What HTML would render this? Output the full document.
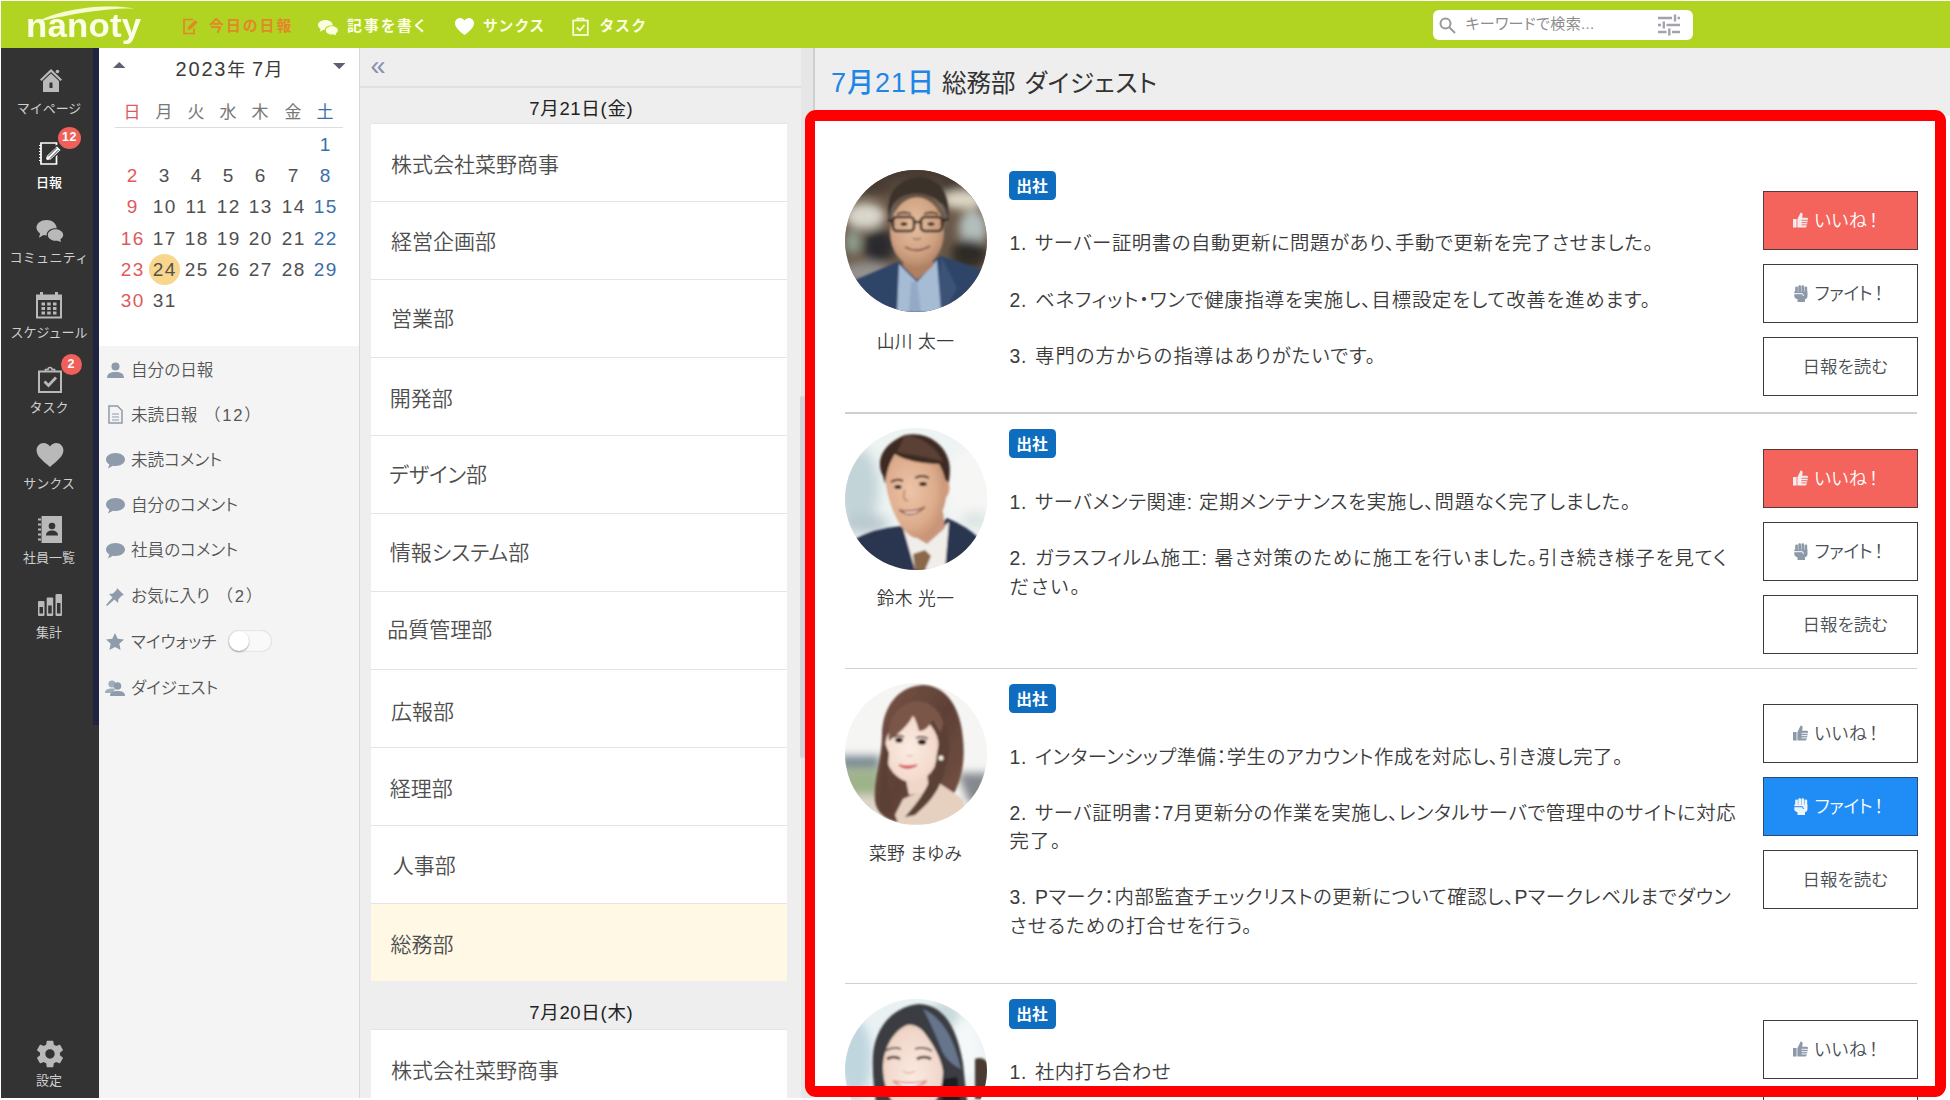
<!DOCTYPE html>
<html lang="ja">
<head>
<meta charset="utf-8">
<title>nanoty</title>
<style>
*{box-sizing:border-box;margin:0;padding:0}
html,body{width:1950px;height:1100px;overflow:hidden;background:#fff}
body{position:relative;font-family:"Liberation Sans","Noto Sans CJK JP",sans-serif;color:#444;font-feature-settings:"palt"}
.abs{position:absolute}
/* header */
#hdr{position:absolute;left:1px;top:1px;width:1949px;height:47px;background:#b1d322}
#hdr .nav{position:absolute;top:0;height:47px;line-height:51px;font-size:14.8px;letter-spacing:2.1px;font-weight:700;color:#fbffe0;white-space:nowrap}
#hdr .nav.on{color:#e2882a}
#search{position:absolute;left:1432px;top:9px;width:260px;height:30px;background:#fff;border-radius:6px}
#search span{position:absolute;left:32.500px;top:0;line-height:28px;font-size:15px;color:#8c8c8c;white-space:nowrap;letter-spacing:.35px}
/* sidebar */
#side{position:absolute;left:1px;top:48px;width:98px;height:1050px;background:#333}
#side .strip{position:absolute;left:92px;top:0;width:6px;height:677px;background:#1f2440}
#side .it{font-feature-settings:normal;position:absolute;left:0;width:96px;text-align:center;font-size:13px;color:#cfcfcf;white-space:nowrap;line-height:16px}
#side .it.on{color:#fff;font-weight:500}
#side .bd{position:absolute;background:#f0605a;color:#fff;border-radius:50%;text-align:center;font-size:12px}
/* calendar */
#cal{position:absolute;left:99px;top:48px;width:260px;height:298px;background:#fff}
#cal .ttl{position:absolute;left:0;top:7px;width:260px;text-align:center;font-size:20px;color:#3a3a3a;line-height:28px;letter-spacing:1.200px}
#cal .wk,#cal .d{position:absolute;width:32px;text-align:center;font-size:17px;line-height:28px;color:#777}
#cal .d{font-size:19px;color:#505050;letter-spacing:1.500px;text-indent:1.500px;line-height:27px}
#cal .sun{color:#e0595c}
#cal .sat{color:#3c6ea8}
#menu{position:absolute;left:99px;top:346px;width:260px;height:752px;background:#f4f4f4}
#menu .mi{position:absolute;left:32px;font-size:16.600px;font-weight:350;color:#555;white-space:nowrap;line-height:24px;margin-top:2px}
#menu .mi i{font-style:normal;font-feature-settings:normal;letter-spacing:1.700px;margin-left:2px}
#menu svg{margin-top:1px}
#menu svg{position:absolute}
/* middle */
#mid{position:absolute;left:359px;top:48px;width:442px;height:1050px;background:#eee;border-left:1px solid #d8d8d8}
#mid .dt{position:absolute;left:0;width:442px;text-align:center;font-size:18.5px;color:#222;line-height:26px;letter-spacing:.7px;text-indent:.7px}
#mid .li{position:absolute;left:11px;width:416px;height:78px;background:#fff;border-top:1px solid #e4e4e4;font-size:21px;font-weight:350;color:#4e4e4e;line-height:79px;padding-left:21px;white-space:nowrap}
#mid .li.sel{background:#fef8e4}
/* right */
#right{position:absolute;left:813px;top:48px;width:1137px;height:1050px;background:#eee;border-left:2px solid #cfcfcf}
#content{position:absolute;left:813px;top:116px;width:1137px;height:984px;background:#fff}
#redbox{position:absolute;left:805px;top:110px;width:1141px;height:987px;border:solid #fe0000;border-width:11px 11.200px 11.200px 10.800px;border-radius:11px}
.hr{position:absolute;left:845px;width:1072px;height:1.500px;background:#cfcfcf}
.av{position:absolute;left:845px;width:142px;height:142px;border-radius:50%;overflow:hidden}
.nm{position:absolute;left:815.500px;width:200px;text-align:center;font-size:17.800px;font-weight:350;color:#3c3c3c;line-height:24px;white-space:nowrap;letter-spacing:.3px}
.tag{position:absolute;left:1008.500px;width:47px;height:29.500px;border-radius:4.500px;background:#0e6dbf;color:#fff;font-weight:700;font-size:15.800px;line-height:31px;text-align:center;letter-spacing:0}
.tx{position:absolute;left:1009.500px;font-size:19.400px;font-weight:350;color:#3c3c3c;white-space:nowrap}
.tx p{line-height:28.600px;margin:0 0 27.700px 0}
.tx .no{display:inline-block;width:25.500px;letter-spacing:.8px}
.btn{position:absolute;left:1762.500px;width:155.500px;height:58.500px;border:1.700px solid #3c3c3c;background:#fff;color:#4a4f55;font-size:18px;font-weight:350;white-space:nowrap}
.btn .ic{position:absolute}
.btn .bt{position:absolute;top:0;line-height:59.500px}
.btn .ex{letter-spacing:0;margin-left:1.700px}
.btn.red{background:#f4645c;color:#fff;border-color:#5a3a38}
.btn.blue{background:#1f8df5;color:#fff;border-color:#2a4a7a}
</style>
</head>
<body>
<div id="hdr">
<div class="abs" style="left:25px;top:6.500px;font-size:33px;font-weight:700;color:#fbffe6;line-height:36px;letter-spacing:.2px;font-family:'Liberation Sans',sans-serif;transform:scaleX(1.055);transform-origin:0 0">nanoty</div>
<svg class="abs" style="left:30px;top:3px" width="112" height="22" viewBox="0 0 112 22"><path d="M5 18.500 C28 5 72 -1 104 4.500 C74 3.500 32 11.500 5 18.500Z" fill="#f6fbd0"/></svg>
<svg class="abs" style="left:181px;top:17px" width="17" height="17" viewBox="0 0 17 17" fill="none" stroke="#e2882a" stroke-width="1.700"><path d="M11 1.5H2v14h10v-5"/><path d="M6 11.5l1-3 6-6 2 2-6 6z" fill="#e2882a" stroke-width="1"/></svg>
<div class="nav on" style="left:208px">今日の日報</div>
<svg class="abs" style="left:317px;top:18.500px" width="20" height="15.500" viewBox="0 0 20 18" preserveAspectRatio="none" fill="#fbffe0"><path d="M7.5 0C3.4 0 0 2.6 0 5.9c0 1.8 1 3.4 2.600 4.500L1.800 13.500l3.400-2c.5.100.900.200 1.400.200.300-3.200 3.300-5.300 6.900-5.300.500 0 1 0 1.400.100C14.600 2.600 11.400 0 7.500 0z"/><path d="M13.800 7.400c-3.300 0-6 2.100-6 4.700s2.700 4.700 6 4.700c.500 0 1-.100 1.500-.200l2.900 1.400-.600-2.500c1.400-.800 2.300-2 2.300-3.400 0-2.600-2.700-4.700-6.100-4.700z"/></svg>
<div class="nav" style="left:346px">記事を書く</div>
<svg class="abs" style="left:454px;top:17px" width="19" height="17" viewBox="0 0 19 17" fill="#fff"><path d="M9.500 17C4 12.500 0 9.300 0 5.200 0 2.300 2.200 0 5 0c1.800 0 3.500 1 4.500 2.500C10.500 1 12.200 0 14 0c2.800 0 5 2.300 5 5.200 0 4.100-4 7.300-9.500 11.800z"/></svg>
<div class="nav" style="left:482px">サンクス</div>
<svg class="abs" style="left:571px;top:16px" width="17" height="19" viewBox="0 0 17 19" fill="none" stroke="#fbffe0" stroke-width="1.700"><rect x="1.200" y="3.500" width="14.600" height="14.500"/><path d="M5.500 3.500V1.500h6v2" /><path d="M4.800 10.500l3 3 4.700-5.500" stroke-width="1.800"/></svg>
<div class="nav" style="left:599px">タスク</div>
<div id="search">
<svg class="abs" style="left:6px;top:7px" width="17" height="17" viewBox="0 0 17 17" fill="none" stroke="#9a9a9a" stroke-width="2"><circle cx="6.500" cy="6.500" r="5"/><path d="M10.500 10.500l5.500 5.500"/></svg>
<span>キーワードで検索...</span>
<svg class="abs" style="left:224px;top:4px" width="24" height="22" viewBox="0 0 24 22" fill="none" stroke="#a3a3ab" stroke-width="2.400"><path d="M1 4h14M20.500 4h2.500M18 .5v7M1 11h3M9.500 11h13.500M6.800 7.500v7M1 18h8.500M15 18h8M12.300 14.500v7"/></svg>
</div>
</div>
<div id="side"><div class="strip"></div>
<svg class="abs" style="left:38.500px;top:21px" width="22" height="23" viewBox="0 0 22 23" fill="#b9b9b9"><path d="M11 0L0 10.500l1.500 1.500L11 3l9.500 9 1.500-1.500z"/><path d="M3 12L11 4.500l8 7.500V23H3z"/><circle cx="17.500" cy="2.500" r="1.800"/><rect x="9.500" y="13.500" width="3" height="5.500" rx=".5" fill="#333"/></svg>
<div class="it" style="top:53px">マイページ</div>
<svg class="abs" style="left:37px;top:93px" width="25" height="25" viewBox="0 0 25 25" fill="none" stroke="#fff" stroke-width="1.700"><path d="M3 2h15.500v21H3z"/><path d="M3 4.500h-2M3 7.500h-2M3 10.500h-2M3 13.500h-2M3 16.500h-2M3 19.500h-2" stroke-width="1.200"/><path d="M6.500 20.500l1.800-6L19 4.500l4.500 4.500L13 19z" fill="#fff" stroke="#333" stroke-width="1.400"/><path d="M10 15.500l8.500-8.500M12 17.500l8.500-8.500" stroke="#333" stroke-width="1"/><path d="M6.500 20.500l1-3.200 2.300 2.300z" fill="#333" stroke="none"/></svg>
<div class="it on" style="top:127px">日報</div>
<svg class="abs" style="left:35px;top:172px" width="28" height="22" viewBox="0 0 32 26" fill="#b9b9b9"><path d="M12 0C5.400 0 0 4 0 9c0 2.800 1.700 5.300 4.300 7L3 21l5.500-3.200c1.100.200 2.300.400 3.500.400 0-5.500 5-8.500 10.500-8.500.600 0 1 0 1.500.100C23.500 4 18.500 0 12 0z"/><path d="M22.500 11c-5 0-9 3-9 6.800s4 6.800 9 6.800c.800 0 1.600-.100 2.300-.200L29 26l-.800-3.300c2-1.200 3.400-3 3.400-5 0-3.700-4.100-6.700-9.100-6.700z"/></svg>
<div class="it" style="top:202px;letter-spacing:.3px">コミュニティ</div>
<svg class="abs" style="left:35px;top:243.500px" width="26" height="27" viewBox="0 0 26 27" fill="#b9b9b9"><path d="M0 2.500h26v24H0zM2 8v16.500h22V8z" fill-rule="evenodd"/><path d="M4 0h3v4H4zM19 0h3v4h-3z"/><g><rect x="5.500" y="10.500" width="3.500" height="3"/><rect x="11.200" y="10.500" width="3.500" height="3"/><rect x="17" y="10.500" width="3.500" height="3"/><rect x="5.500" y="15" width="3.500" height="3"/><rect x="11.200" y="15" width="3.500" height="3"/><rect x="17" y="15" width="3.500" height="3"/><rect x="5.500" y="19.500" width="3.500" height="3"/><rect x="11.200" y="19.500" width="3.500" height="3"/><rect x="17" y="19.500" width="3.500" height="3"/></g></svg>
<div class="it" style="top:277px">スケジュール</div>
<svg class="abs" style="left:37px;top:318px" width="24" height="27" viewBox="0 0 24 27" fill="none" stroke="#b9b9b9" stroke-width="2"><rect x="1" y="5.500" width="22" height="20.500"/><path d="M7.500 5.500V3.500h2.500a2 2 0 0 1 4 0h2.500v2" stroke-width="1.600"/><path d="M6.500 15.500l4 4 7.500-8" stroke-width="2.800"/></svg>
<div class="it" style="top:352px">タスク</div>
<svg class="abs" style="left:35px;top:395px" width="28" height="24" viewBox="0 0 19 17" fill="#b9b9b9"><path d="M9.500 17C4 12.500 0 9.300 0 5.200 0 2.300 2.200 0 5 0c1.800 0 3.500 1 4.500 2.500C10.500 1 12.200 0 14 0c2.800 0 5 2.300 5 5.200 0 4.100-4 7.300-9.500 11.800z"/></svg>
<div class="it" style="top:427.500px">サンクス</div>
<svg class="abs" style="left:36px;top:468px" width="26" height="27" viewBox="0 0 26 27" fill="#b9b9b9"><path d="M4.500 0h20.500v27H4.500z"/><path d="M1 3.500h3M1 8.500h3M1 13.500h3M1 18.500h3M1 23.500h3" stroke="#b9b9b9" stroke-width="2"/><circle cx="15" cy="10" r="3.300" fill="#333"/><path d="M9 19.500c0-3.500 2.700-5 6-5s6 1.500 6 5z" fill="#333"/></svg>
<div class="it" style="top:501.500px">社員一覧</div>
<svg class="abs" style="left:37px;top:546px" width="24" height="22" viewBox="0 0 24 22" fill="#b9b9b9"><rect x="0" y="7" width="6.500" height="15" rx="1"/><rect x="8.700" y="3.500" width="6.500" height="18.500" rx="1"/><rect x="17.500" y="0" width="6.500" height="22" rx="1"/><rect x="1.500" y="13" width="3.500" height="6.500" fill="#333"/><rect x="10.200" y="11.500" width="3.500" height="8" fill="#333"/><rect x="19" y="9" width="3.500" height="10.500" fill="#333"/></svg>
<div class="it" style="top:577px">集計</div>
<svg class="abs" style="left:32.500px;top:990px" width="32" height="32" viewBox="0 0 24 24" fill="#b9b9b9"><path d="M19.430 12.980c.040-.320.070-.640.070-.980s-.030-.660-.070-.980l2.110-1.650c.190-.150.240-.420.120-.640l-2-3.460c-.120-.220-.390-.300-.610-.220l-2.490 1c-.520-.400-1.080-.730-1.690-.980l-.380-2.650C14.460 2.180 14.250 2 14 2h-4c-.250 0-.460.180-.490.420l-.380 2.650c-.610.250-1.170.590-1.690.980l-2.490-1c-.230-.090-.490 0-.610.220l-2 3.460c-.130.220-.070.490.120.640l2.110 1.650c-.040.320-.070.650-.070.980s.030.660.070.980l-2.110 1.650c-.190.150-.240.420-.120.640l2 3.460c.120.220.390.300.610.220l2.490-1c.520.400 1.080.730 1.690.980l.380 2.650c.030.240.240.420.490.420h4c.250 0 .460-.180.490-.420l.380-2.650c.610-.250 1.170-.590 1.690-.980l2.490 1c.230.090.490 0 .610-.220l2-3.460c.120-.220.070-.490-.120-.640l-2.110-1.650zM12 15.500c-1.930 0-3.500-1.570-3.500-3.500s1.570-3.500 3.500-3.500 3.500 1.570 3.500 3.500-1.570 3.500-3.500 3.500z"/></svg>
<div class="it" style="top:1025px">設定</div>
<div class="bd" style="left:57px;top:79px;width:23px;height:22px;line-height:21px;font-size:12.500px;font-weight:700;letter-spacing:.5px">12</div>
<div class="bd" style="left:59.500px;top:305.500px;width:21px;height:21px;line-height:20px;font-size:12.500px;font-weight:700">2</div>
</div>
<div id="cal">
<div class="ttl"><span style="letter-spacing:1.800px">2023</span><span style="font-size:18px;letter-spacing:0">年</span> <span>7</span><span style="font-size:18px;letter-spacing:0">月</span></div>
<svg class="abs" style="left:14px;top:14px" width="12.500" height="6.500" viewBox="0 0 13 8" preserveAspectRatio="none"><path d="M0 7.500L6.500 0 13 7.500z" fill="#5c6070"/></svg>
<svg class="abs" style="left:233.500px;top:14.500px" width="12.500" height="6.500" viewBox="0 0 13 8" preserveAspectRatio="none"><path d="M0 0h13L6.500 7.500z" fill="#5c6070"/></svg>
<div class="wk sun" style="left:17px;top:51px">日</div>
<div class="wk" style="left:49px;top:51px">月</div>
<div class="wk" style="left:81px;top:51px">火</div>
<div class="wk" style="left:113px;top:51px">水</div>
<div class="wk" style="left:145px;top:51px">木</div>
<div class="wk" style="left:178px;top:51px">金</div>
<div class="wk sat" style="left:210px;top:51px">土</div>
<div class="abs" style="left:16px;top:79px;width:228px;height:1px;background:#ddd"></div>
<div class="abs" style="left:50px;top:206px;width:31px;height:31px;border-radius:50%;background:#f8d68b"></div>
<div class="d sat" style="left:210px;top:83px">1</div>
<div class="d sun" style="left:17px;top:114px">2</div>
<div class="d" style="left:49px;top:114px">3</div>
<div class="d" style="left:81px;top:114px">4</div>
<div class="d" style="left:113px;top:114px">5</div>
<div class="d" style="left:145px;top:114px">6</div>
<div class="d" style="left:178px;top:114px">7</div>
<div class="d sat" style="left:210px;top:114px">8</div>
<div class="d sun" style="left:17px;top:145px">9</div>
<div class="d" style="left:49px;top:145px">10</div>
<div class="d" style="left:81px;top:145px">11</div>
<div class="d" style="left:113px;top:145px">12</div>
<div class="d" style="left:145px;top:145px">13</div>
<div class="d" style="left:178px;top:145px">14</div>
<div class="d sat" style="left:210px;top:145px">15</div>
<div class="d sun" style="left:17px;top:177px">16</div>
<div class="d" style="left:49px;top:177px">17</div>
<div class="d" style="left:81px;top:177px">18</div>
<div class="d" style="left:113px;top:177px">19</div>
<div class="d" style="left:145px;top:177px">20</div>
<div class="d" style="left:178px;top:177px">21</div>
<div class="d sat" style="left:210px;top:177px">22</div>
<div class="d sun" style="left:17px;top:208px">23</div>
<div class="d" style="left:49px;top:208px">24</div>
<div class="d" style="left:81px;top:208px">25</div>
<div class="d" style="left:113px;top:208px">26</div>
<div class="d" style="left:145px;top:208px">27</div>
<div class="d" style="left:178px;top:208px">28</div>
<div class="d sat" style="left:210px;top:208px">29</div>
<div class="d sun" style="left:17px;top:239px">30</div>
<div class="d" style="left:49px;top:239px">31</div>
</div>
<div id="menu">
<svg style="left:8px;top:15px" width="17" height="16" viewBox="0 0 17 16" fill="#8d9bab"><circle cx="8.500" cy="4.500" r="4"/><path d="M0 16c0-4.500 3.500-6 8.500-6s8.500 1.500 8.500 6z"/></svg>
<div class="mi" style="top:11px">自分の日報</div>
<svg style="left:9px;top:58px" width="15" height="19" viewBox="0 0 15 19" fill="none" stroke="#8d9bab" stroke-width="1.500"><path d="M1 1h8.500L14 5.500V18H1z"/><path d="M4 9h7M4 12h7M4 15h7" stroke-width="1.200"/></svg>
<div class="mi" style="top:56px">未読日報 <i>（12）</i></div>
<svg style="left:7px;top:106px" width="19" height="16" viewBox="0 0 19 16" fill="#8d9bab"><path d="M9.500 0C4.300 0 0 2.900 0 6.500c0 2 1.300 3.800 3.400 5L2 15.500l5-2.700c.8.100 1.600.200 2.500.200 5.200 0 9.500-2.900 9.500-6.500S14.700 0 9.500 0z"/></svg>
<div class="mi" style="top:101px">未読コメント</div>
<svg style="left:7px;top:151px" width="19" height="16" viewBox="0 0 19 16" fill="#8d9bab"><path d="M9.500 0C4.300 0 0 2.900 0 6.500c0 2 1.300 3.800 3.400 5L2 15.500l5-2.700c.8.100 1.600.200 2.500.200 5.200 0 9.500-2.900 9.500-6.500S14.700 0 9.500 0z"/></svg>
<div class="mi" style="top:146px">自分のコメント</div>
<svg style="left:7px;top:196px" width="19" height="16" viewBox="0 0 19 16" fill="#8d9bab"><path d="M9.500 0C4.300 0 0 2.900 0 6.500c0 2 1.300 3.800 3.400 5L2 15.500l5-2.700c.8.100 1.600.200 2.500.200 5.200 0 9.500-2.900 9.500-6.500S14.700 0 9.500 0z"/></svg>
<div class="mi" style="top:191px">社員のコメント</div>
<svg style="left:7px;top:241px" width="18" height="18" viewBox="0 0 18 18" fill="#8d9bab"><path d="M11 0l7 7-2 .5-3.500 3.500-.5 4-3.500-3.500L1 18l-1-1 6.500-7.500L3 6l4-.5L10.500 2z"/></svg>
<div class="mi" style="top:237px">お気に入り <i>（2）</i></div>
<svg style="left:7px;top:286px" width="18" height="17" viewBox="0 0 18 17" fill="#8d9bab"><path d="M9 0l2.700 5.800 6.300.7-4.700 4.300 1.300 6.200L9 13.900 3.400 17l1.300-6.200L0 6.500l6.300-.7z"/></svg>
<div class="mi" style="top:283px">マイウォッチ</div>
<svg style="left:6px;top:333px" width="20" height="16" viewBox="0 0 20 16" fill="#8d9bab"><circle cx="7" cy="4" r="3.600" opacity=".8"/><path d="M0 13c0-3.500 3-4.500 7-4.500 1 0 2 .100 3 .500L8 13z" opacity=".8"/><circle cx="12.500" cy="6" r="3.800"/><path d="M5 16c0-3.800 3-5 7.500-5s7.500 1.200 7.500 5z"/></svg>
<div class="mi" style="top:329px">ダイジェスト</div>
<div class="abs" style="left:129px;top:284px;width:44px;height:22px;border-radius:11px;background:#f9f9f9;box-shadow:0 0 2px rgba(0,0,0,.25) inset"></div>
<div class="abs" style="left:130px;top:285px;width:20px;height:20px;border-radius:50%;background:#fff;box-shadow:0 1px 2px rgba(0,0,0,.35)"></div>
</div>
<div id="mid">
<div class="abs" style="left:10.500px;top:4.500px;font-size:27px;line-height:26px;color:#8590ae;font-family:'Liberation Sans',sans-serif">«</div>
<div class="abs" style="left:0;top:38px;width:441px;height:1.500px;background:#e0e0e0"></div>
<div class="dt" style="top:48px">7月21日(金)</div>
<div class="li" style="top:75px"><span style="position:relative;left:-1.1px;top:0.8px">株式会社菜野商事</span></div>
<div class="li" style="top:153px"><span style="position:relative;left:-1.1px;top:-0.3px">経営企画部</span></div>
<div class="li" style="top:231px"><span style="position:relative;left:-1.1px;top:-1px">営業部</span></div>
<div class="li" style="top:309px"><span style="position:relative;left:-2.2px;top:0.5px">開発部</span></div>
<div class="li" style="top:387px"><span style="position:relative;left:-2.9px;top:-1px">デザイン部</span></div>
<div class="li" style="top:465px"><span style="position:relative;left:-2.2px;top:-0.7px">情報システム部</span></div>
<div class="li" style="top:543px"><span style="position:relative;left:-4.7px;top:-2.5px">品質管理部</span></div>
<div class="li" style="top:621px"><span style="position:relative;left:-1.1px;top:1.5px">広報部</span></div>
<div class="li" style="top:699px"><span style="position:relative;left:-2.2px;top:1px">経理部</span></div>
<div class="li" style="top:777px"><span style="position:relative;left:0.7px;top:0px">人事部</span></div>
<div class="li sel" style="top:855px"><span style="position:relative;left:-1.4px;top:0.8px">総務部</span></div>
<div class="dt" style="top:952px">7月20日(木)</div>
<div class="li" style="top:981px"><span style="position:relative;left:-1.100px;top:.5px">株式会社菜野商事</span></div>
</div>
<div class="abs" style="left:801px;top:48px;width:12px;height:1050px;background:#e6e6e6"></div>
<div class="abs" style="left:800px;top:396px;width:5px;height:362px;background:#d2d2da;border-radius:2px"></div>
<div id="right">
<div class="abs" style="left:16px;top:17px;font-size:24.500px;line-height:36px;white-space:nowrap;color:#333"><span style="color:#1f86e8;letter-spacing:1px;font-size:27px;font-weight:500">7月21日</span><span style="margin-left:7px">総務部</span><span style="margin-left:9px;letter-spacing:.7px">ダイジェスト</span></div>
</div>
<div id="content"></div>
<div id="cards">
<div class="av" style="top:170.3px"><svg width="142" height="142" viewBox="0 0 142 142">
<defs><filter id="b1" x="-20%" y="-20%" width="140%" height="140%"><feGaussianBlur stdDeviation="5"/></filter><filter id="s1"><feGaussianBlur stdDeviation="1.100"/></filter>
<radialGradient id="f1" cx=".45" cy=".4" r=".7"><stop offset="0" stop-color="#e6c0a0"/><stop offset=".6" stop-color="#cfa282"/><stop offset="1" stop-color="#a87a5c"/></radialGradient></defs>
<rect width="142" height="142" fill="#6a5848"/>
<g filter="url(#b1)">
<rect x="-10" y="-10" width="162" height="34" fill="#463b31"/>
<ellipse cx="20" cy="46" rx="20" ry="13" fill="#d9d6cc"/>
<ellipse cx="118" cy="30" rx="22" ry="9" fill="#e0d8c6"/>
<ellipse cx="128" cy="58" rx="14" ry="18" fill="#b3bdbb"/>
<ellipse cx="34" cy="76" rx="16" ry="17" fill="#2b2a2d"/>
<ellipse cx="124" cy="84" rx="18" ry="15" fill="#2f2926"/>
<ellipse cx="22" cy="104" rx="26" ry="12" fill="#95918d"/>
<ellipse cx="8" cy="72" rx="8" ry="12" fill="#8f9f8f"/>
<ellipse cx="70" cy="16" rx="30" ry="6" fill="#5a4c3e"/>
</g>
<g filter="url(#s1)">
<path d="M10 110 L52 92 L72 100 L96 86 L138 100 L145 150 L0 150z" fill="#2e4467"/>
<path d="M96 86 L112 118 L100 142 L92 142z" fill="#3a5277"/>
<path d="M54 94 L72 112 L92 90 L96 142 L52 142z" fill="#a6bbd4"/>
<path d="M66 112 L72 112 L76 142 L64 142z" fill="#93aac6"/>
<path d="M58 80h30v16l-16 14-14-14z" fill="#b08062"/>
<ellipse cx="72" cy="62" rx="27" ry="35" fill="url(#f1)"/>
<path d="M45 52 C40 30 46 12 72 7 C98 7 106 28 103 54 C101 42 97 32 88 27 C74 20 58 23 51 31 C47 38 46 46 45 52z" fill="#3a302b"/>
<path d="M45 52 C44 44 46 36 51 31 C49 40 48 48 47 58z M103 54 C103 44 100 36 96 32 C99 40 100 50 100 60z" fill="#6a625e"/>
<g fill="none" stroke="#3b2b24" stroke-width="2.600"><rect x="48" y="47" width="21" height="14" rx="4"/><rect x="76" y="47" width="21" height="14" rx="4"/><path d="M69 52h7M43 50l5 1M97 51l6-2"/></g>
<path d="M60 77 Q72 84 85 76" fill="none" stroke="#8a5346" stroke-width="2"/>
<ellipse cx="59" cy="54" rx="3.500" ry="1.800" fill="#2e211c"/><ellipse cx="86" cy="54" rx="3.500" ry="1.800" fill="#2e211c"/><path d="M52 44q7-3 14 0M79 44q7-3 14 0" stroke="#3a2d27" stroke-width="1.800" fill="none"/>
<path d="M68 68q4 3 8 0" stroke="#9a6a52" stroke-width="1.500" fill="none"/>
</g></svg></div>
<div class="nm" style="top:329.6px">山川 太一</div>
<div class="tag" style="top:170.6px">出社</div>
<div class="tx" style="top:228.7px"><p style="margin-bottom:28.3px"><span class="no">1.</span><span class="ln" id="l0" style="letter-spacing:0.566px">サーバー証明書の自動更新に問題があり、手動で更新を完了させました。</span></p><p style="margin-bottom:28.3px"><span class="no">2.</span><span class="ln" id="l1" style="letter-spacing:0.786px">ベネフィット・ワンで健康指導を実施し、目標設定をして改善を進めます。</span></p><p style="margin-bottom:28.3px"><span class="no">3.</span><span class="ln" id="l2" style="letter-spacing:1.039px">専門の方からの指導はありがたいです。</span></p></div>
<div class="btn red" style="top:191.1px"><svg class="ic" style="left:29.5px;top:20px" width="15" height="16" viewBox="0 0 15 16" fill="#f3ecee"><path d="M0 7h3.600v8.500H0z"/><path d="M4.400 7.200L7.600.5c1.500 0 2.300 1 2 2.600L9.100 5.800h4.600c1 0 1.500.8 1.300 1.600l-1.300 6.600c-.200.900-.800 1.500-1.800 1.500H4.400z"/><path d="M8.500 8.300h6.500M8.500 10.600h6M8.500 12.900h5.500" stroke="#f4645c" stroke-width=".9"/></svg><span class="bt" style="left:50.500px;letter-spacing:.4px">いいね<span class="ex">！</span></span></div>
<div class="btn" style="top:264.1px"><svg class="ic" style="left:30.5px;top:19.500px" width="14" height="17" viewBox="0 0 14 17" fill="#8d99a8"><rect x="1.200" y="1.500" width="2.700" height="6" rx="1.200"/><rect x="4.300" y="0.300" width="2.700" height="7" rx="1.200"/><rect x="7.400" y="0.300" width="2.700" height="7" rx="1.200"/><rect x="10.500" y="1.500" width="2.700" height="6" rx="1.200"/><path d="M.3 6.500h13.200v4.500c0 1.800-1 2.800-2.500 3.300V17H3.500v-2.700C1.800 13.800.3 12.800.3 11z"/><path d="M0 8.700h8.500l1 2.300" fill="none" stroke="#fff" stroke-width="1"/></svg><span class="bt" style="left:51px;letter-spacing:-.4px">ファイト<span class="ex" style="margin-left:2px">！</span></span></div>
<div class="btn" style="top:337.1px"><span class="bt" style="left:39px;font-size:17.500px">日報を読む</span></div>
<div class="hr" style="top:412.4px"></div>
<div class="av" style="top:428.3px"><svg width="142" height="142" viewBox="0 0 142 142">
<defs><filter id="b2" x="-20%" y="-20%" width="140%" height="140%"><feGaussianBlur stdDeviation="6"/></filter><filter id="s2"><feGaussianBlur stdDeviation="1.100"/></filter>
<radialGradient id="f2" cx=".4" cy=".45" r=".7"><stop offset="0" stop-color="#eec4a8"/><stop offset=".6" stop-color="#dcab8c"/><stop offset="1" stop-color="#b98466"/></radialGradient></defs>
<rect width="142" height="142" fill="#eef3f3"/>
<g filter="url(#b2)">
<ellipse cx="12" cy="60" rx="22" ry="40" fill="#c3d4d8"/>
<ellipse cx="20" cy="96" rx="24" ry="10" fill="#b9c9ce"/>
<ellipse cx="125" cy="60" rx="22" ry="40" fill="#f6f7f5"/>
<ellipse cx="130" cy="92" rx="14" ry="8" fill="#d9e3e3"/>
</g>
<g filter="url(#s2)">
<path d="M8 112 Q30 100 56 98 L74 118 L102 90 Q122 98 136 112 L145 150 L0 150z" fill="#2a3550"/>
<path d="M58 100 L70 142 L100 142 L104 94 L84 112z" fill="#f1eeea"/>
<path d="M68 126 L80 122 L86 128 L80 142 L70 142z" fill="#8a6848"/>
<path d="M60 90 L98 84 L100 100 L82 116 L62 104z" fill="#c9967a"/>
<path d="M40 50 C38 30 50 22 72 24 C94 26 104 40 102 62 C100 86 88 108 74 110 C60 112 44 84 40 50z" fill="url(#f2)"/>
<path d="M38 48 C30 32 38 16 60 7 C82 3 100 16 104 34 C106 44 104 52 103 60 C100 52 99 44 94 36 C84 36 62 34 50 26 C46 32 42 40 40 56z" fill="#3c2a22"/>
<path d="M60 7 C74 8 92 18 98 34 C88 30 70 28 52 24z" fill="#5a4034"/>
<path d="M100 52 q6 2 4 12 q-2 6 -5 6z" fill="#cf9c7e"/>
<path d="M46 54q6-4 12-1M70 50q7-4 14 0" stroke="#3a2a24" stroke-width="2" fill="none"/>
<ellipse cx="53" cy="59" rx="3.600" ry="2" fill="#2a1c18"/><ellipse cx="78" cy="56" rx="3.800" ry="2.100" fill="#2a1c18"/>
<path d="M54 82 Q66 92 80 79 Q68 85 54 82z" fill="#f4ece6" stroke="#9a5a4c" stroke-width="1.500"/>
<path d="M60 62q-4 9 3 11" stroke="#b98468" stroke-width="1.500" fill="none"/>
</g></svg></div>
<div class="nm" style="top:586.5px">鈴木 光一</div>
<div class="tag" style="top:428.5px">出社</div>
<div class="tx" style="top:488.2px"><p style="margin-bottom:27.6px"><span class="no">1.</span><span class="ln" id="l3" style="letter-spacing:0.723px">サーバメンテ関連: 定期メンテナンスを実施し、問題なく完了しました。</span></p><p style="margin-bottom:27.6px"><span class="no">2.</span><span class="ln" id="l4" style="letter-spacing:0.975px">ガラスフィルム施工: 暑さ対策のために施工を行いました。引き続き様子を見てく</span><br><span class="ln" id="l5" style="letter-spacing:1.85px">ださい。</span></p></div>
<div class="btn red" style="top:449.2px"><svg class="ic" style="left:29.5px;top:20px" width="15" height="16" viewBox="0 0 15 16" fill="#f3ecee"><path d="M0 7h3.600v8.500H0z"/><path d="M4.400 7.200L7.600.5c1.500 0 2.300 1 2 2.600L9.100 5.800h4.600c1 0 1.500.8 1.300 1.600l-1.300 6.600c-.200.900-.800 1.500-1.800 1.500H4.400z"/><path d="M8.500 8.300h6.500M8.500 10.600h6M8.500 12.900h5.500" stroke="#f4645c" stroke-width=".9"/></svg><span class="bt" style="left:50.500px;letter-spacing:.4px">いいね<span class="ex">！</span></span></div>
<div class="btn" style="top:522.2px"><svg class="ic" style="left:30.5px;top:19.500px" width="14" height="17" viewBox="0 0 14 17" fill="#8d99a8"><rect x="1.200" y="1.500" width="2.700" height="6" rx="1.200"/><rect x="4.300" y="0.300" width="2.700" height="7" rx="1.200"/><rect x="7.400" y="0.300" width="2.700" height="7" rx="1.200"/><rect x="10.500" y="1.500" width="2.700" height="6" rx="1.200"/><path d="M.3 6.500h13.200v4.500c0 1.800-1 2.800-2.500 3.300V17H3.500v-2.700C1.800 13.800.3 12.800.3 11z"/><path d="M0 8.700h8.500l1 2.300" fill="none" stroke="#fff" stroke-width="1"/></svg><span class="bt" style="left:51px;letter-spacing:-.4px">ファイト<span class="ex" style="margin-left:2px">！</span></span></div>
<div class="btn" style="top:595.2px"><span class="bt" style="left:39px;font-size:17.500px">日報を読む</span></div>
<div class="hr" style="top:667.5px"></div>
<div class="av" style="top:683.3px"><svg width="142" height="142" viewBox="0 0 142 142">
<defs><filter id="b3" x="-20%" y="-20%" width="140%" height="140%"><feGaussianBlur stdDeviation="4"/></filter><filter id="s3"><feGaussianBlur stdDeviation="1.100"/></filter>
<radialGradient id="f3" cx=".45" cy=".5" r=".7"><stop offset="0" stop-color="#fbece2"/><stop offset=".7" stop-color="#f3d9cc"/><stop offset="1" stop-color="#e0b9a8"/></radialGradient>
<linearGradient id="h3" x1="0" y1="0" x2="1" y2="1"><stop offset="0" stop-color="#7a5648"/><stop offset=".5" stop-color="#5e4036"/><stop offset="1" stop-color="#7b5747"/></linearGradient></defs>
<rect width="142" height="142" fill="#f5f5f3"/>
<g filter="url(#b3)">
<rect x="-5" y="73" width="40" height="12" fill="#76878f"/>
<rect x="-5" y="86" width="42" height="26" fill="#9fb38a"/>
<rect x="0" y="112" width="40" height="20" fill="#ddd6c8"/>
<path d="M112 90h32v34l-20-4z" fill="#85888e"/>
</g>
<g filter="url(#s3)">
<path d="M77 2 C50 4 37 28 37 52 C37 76 28 96 30 118 C32 132 44 138 56 140 L102 122 C114 106 121 84 118 56 C116 26 102 2 77 2z" fill="url(#h3)"/>
<path d="M50 132 L58 116 L94 100 L118 116 L126 142 L54 142z" fill="#e6d0c0"/>
<path d="M60 92 L82 90 L84 108 L64 112z" fill="#f0d6c8"/>
<ellipse cx="67" cy="66" rx="27" ry="33" fill="url(#f3)"/>
<path d="M44 58 C42 36 52 22 70 18 C90 18 100 34 100 52 C96 50 92 46 88 36 C84 44 80 48 74 48 C72 40 70 36 68 32 C64 42 54 50 44 58z" fill="#7a5648"/>
<path d="M98 40 C108 56 104 80 96 98 C92 110 84 120 70 132 L60 134 C76 116 90 96 92 70z" fill="#5a3f36"/>
<path d="M40 60 C36 80 34 100 36 124 L48 130 C42 110 42 90 44 70z" fill="#5a3f36"/>
<ellipse cx="54" cy="57" rx="3.800" ry="2.600" fill="#2e1e1a"/><ellipse cx="77" cy="59" rx="4.200" ry="2.800" fill="#2e1e1a"/><path d="M49 54q5-3 10 0M71 55q7-3 12 1" stroke="#3a2622" stroke-width="1.500" fill="none"/><path d="M62 72q3 2 6 0" stroke="#e2b4a4" stroke-width="1.300" fill="none"/>
<path d="M54 82 Q62 88 72 82 Q62 85 54 82z" fill="#e0615f" stroke="#d85a5a" stroke-width="1.800"/>
<circle cx="96" cy="75" r="2.500" fill="#f4efe6"/>
</g></svg></div>
<div class="nm" style="top:842px">菜野 まゆみ</div>
<div class="tag" style="top:683.5px">出社</div>
<div class="tx" style="top:743px"><p style="margin-bottom:27.3px"><span class="no">1.</span><span class="ln" id="l6" style="letter-spacing:0.509px">インターンシップ準備：学生のアカウント作成を対応し、引き渡し完了。</span></p><p style="margin-bottom:27.3px"><span class="no">2.</span><span class="ln" id="l7" style="letter-spacing:0.575px">サーバ証明書：7月更新分の作業を実施し、レンタルサーバで管理中のサイトに対応</span><br><span class="ln" id="l8" style="letter-spacing:1.2px">完了。</span></p><p style="margin-bottom:27.3px"><span class="no">3.</span><span class="ln" id="l9" style="letter-spacing:0.595px">Pマーク：内部監査チェックリストの更新について確認し、Pマークレベルまでダウン</span><br><span class="ln" id="l10" style="letter-spacing:1.094px">させるための打合せを行う。</span></p></div>
<div class="btn" style="top:704.2px"><svg class="ic" style="left:29.5px;top:20px" width="15" height="16" viewBox="0 0 15 16" fill="#8d99a8"><path d="M0 7h3.600v8.500H0z"/><path d="M4.400 7.200L7.600.5c1.500 0 2.300 1 2 2.600L9.100 5.800h4.600c1 0 1.500.8 1.300 1.600l-1.300 6.600c-.200.900-.800 1.500-1.800 1.500H4.400z"/><path d="M8.500 8.300h6.500M8.500 10.600h6M8.500 12.900h5.500" stroke="#fff" stroke-width=".9"/></svg><span class="bt" style="left:50.500px;letter-spacing:.4px">いいね<span class="ex">！</span></span></div>
<div class="btn blue" style="top:777.2px"><svg class="ic" style="left:30.5px;top:19.500px" width="14" height="17" viewBox="0 0 14 17" fill="#eef4fb"><rect x="1.200" y="1.500" width="2.700" height="6" rx="1.200"/><rect x="4.300" y="0.300" width="2.700" height="7" rx="1.200"/><rect x="7.400" y="0.300" width="2.700" height="7" rx="1.200"/><rect x="10.500" y="1.500" width="2.700" height="6" rx="1.200"/><path d="M.3 6.500h13.200v4.500c0 1.800-1 2.800-2.500 3.300V17H3.500v-2.700C1.800 13.800.3 12.800.3 11z"/><path d="M0 8.700h8.500l1 2.300" fill="none" stroke="#1f8df5" stroke-width="1"/></svg><span class="bt" style="left:51px;letter-spacing:-.4px">ファイト<span class="ex" style="margin-left:2px">！</span></span></div>
<div class="btn" style="top:850.2px"><span class="bt" style="left:39px;font-size:17.500px">日報を読む</span></div>
<div class="hr" style="top:982.5px"></div>
<div class="av" style="top:999.3px"><svg width="142" height="142" viewBox="0 0 142 142">
<defs><filter id="b4" x="-20%" y="-20%" width="140%" height="140%"><feGaussianBlur stdDeviation="5"/></filter><filter id="s4"><feGaussianBlur stdDeviation="1.100"/></filter>
<radialGradient id="f4" cx=".5" cy=".55" r=".7"><stop offset="0" stop-color="#fbeae0"/><stop offset=".7" stop-color="#f0d6c9"/><stop offset="1" stop-color="#d9b3a2"/></radialGradient></defs>
<rect width="142" height="142" fill="#e9f1f3"/>
<g filter="url(#b4)">
<ellipse cx="10" cy="60" rx="16" ry="40" fill="#bfd6de"/>
<ellipse cx="100" cy="16" rx="14" ry="14" fill="#c9d9dc"/>
<ellipse cx="120" cy="50" rx="16" ry="30" fill="#f4f8f8"/>
</g>
<g filter="url(#s4)">
<path d="M130 60 Q142 56 144 70 L144 100 L130 100z" fill="#4a3a33"/>
<path d="M74 5 C46 8 30 30 28 56 C27 80 30 100 34 120 L124 120 C122 100 120 84 118 64 C112 30 100 6 74 5z" fill="#3b3e42"/>
<path d="M78 10 C100 20 110 44 116 70 C112 68 104 64 98 54 C92 40 86 24 78 10z" fill="#66748c"/>
<path d="M62 26 C48 32 38 50 38 68 C38 92 50 114 66 118 C84 118 98 98 98 72 C96 58 86 42 78 32 C74 28 68 25 62 26z" fill="url(#f4)"/>
<path d="M98 80 L112 78 L118 120 L96 120z" fill="#1d1e22"/>
<path d="M42 60q7-4 13 0M72 60q7-4 14 0" stroke="#4a342c" stroke-width="2.600" fill="none"/>
<path d="M40 52q8-5 16-2M70 50q9-3 17 2" stroke="#5a4840" stroke-width="1.600" fill="none"/>
<path d="M48 82 Q64 96 82 82 Q64 86 48 82z" fill="#fff" stroke="#d98c84" stroke-width="1.600"/>
<path d="M58 72q6 4 12 0" stroke="#dcae9c" stroke-width="1.500" fill="none"/>
</g></svg></div>
<div class="tag" style="top:999.3px">出社</div>
<div class="tx" style="top:1058.3px"><p style="margin-bottom:27.7px"><span class="no">1.</span><span class="ln" id="l11" style="letter-spacing:0.414px">社内打ち合わせ</span></p></div>
<div class="btn" style="top:1020px"><svg class="ic" style="left:29.5px;top:20px" width="15" height="16" viewBox="0 0 15 16" fill="#8d99a8"><path d="M0 7h3.600v8.500H0z"/><path d="M4.400 7.200L7.600.5c1.500 0 2.300 1 2 2.600L9.100 5.800h4.600c1 0 1.500.8 1.300 1.600l-1.300 6.600c-.200.900-.800 1.500-1.800 1.500H4.400z"/><path d="M8.500 8.300h6.500M8.500 10.600h6M8.500 12.900h5.500" stroke="#fff" stroke-width=".9"/></svg><span class="bt" style="left:50.500px;letter-spacing:.4px">いいね<span class="ex">！</span></span></div>
<div class="btn" style="top:1093px"><svg class="ic" style="left:30.5px;top:19.500px" width="14" height="17" viewBox="0 0 14 17" fill="#8d99a8"><rect x="1.200" y="1.500" width="2.700" height="6" rx="1.200"/><rect x="4.300" y="0.300" width="2.700" height="7" rx="1.200"/><rect x="7.400" y="0.300" width="2.700" height="7" rx="1.200"/><rect x="10.500" y="1.500" width="2.700" height="6" rx="1.200"/><path d="M.3 6.500h13.200v4.500c0 1.800-1 2.800-2.500 3.300V17H3.500v-2.700C1.800 13.800.3 12.800.3 11z"/><path d="M0 8.700h8.500l1 2.300" fill="none" stroke="#fff" stroke-width="1"/></svg><span class="bt" style="left:51px;letter-spacing:-.4px">ファイト<span class="ex" style="margin-left:2px">！</span></span></div>
<div class="btn" style="top:1166px"><span class="bt" style="left:39px;font-size:17.500px">日報を読む</span></div>
</div>
<div id="redbox"></div>
</body>
</html>
